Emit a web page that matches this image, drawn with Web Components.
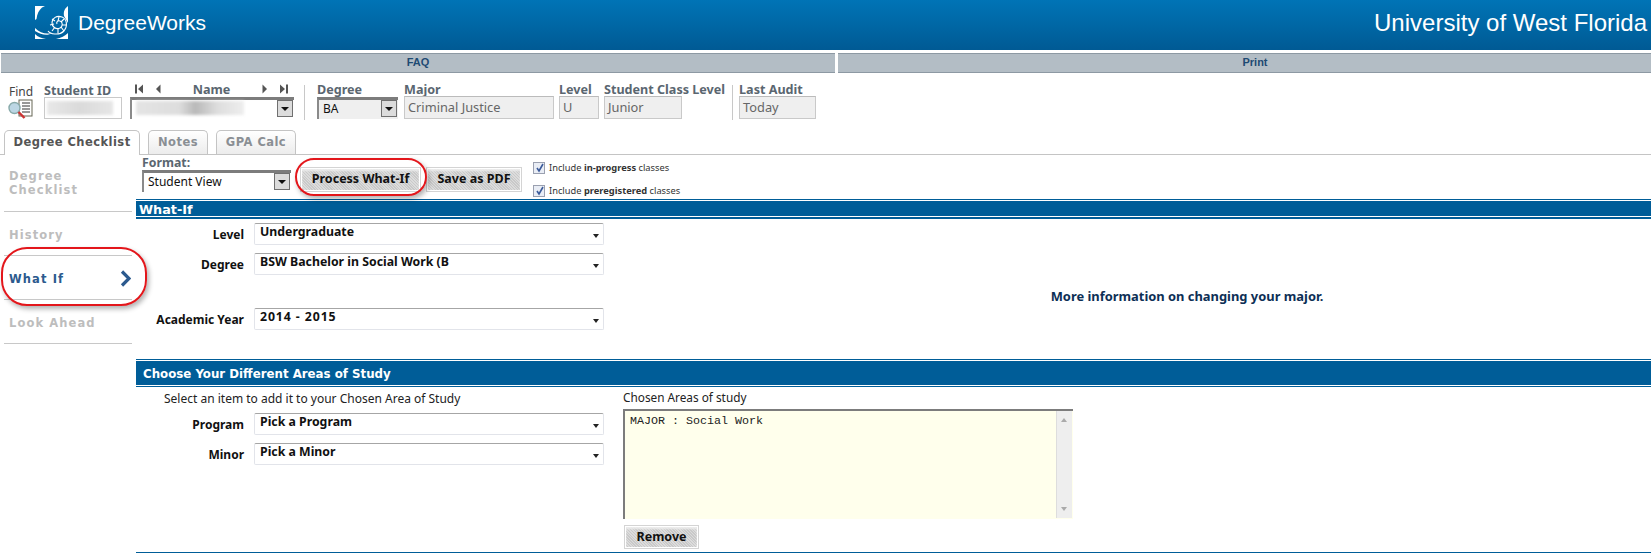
<!DOCTYPE html>
<html lang="en"><head><meta charset="utf-8"><title>DegreeWorks</title>
<style>
html,body{margin:0;padding:0;background:#fff}
body{width:1651px;height:553px;overflow:hidden;font-family:"Noto Sans","Liberation Sans",sans-serif;position:relative}
</style></head><body>
<dw-app></dw-app>
<script>
function def(name,css,html){
  customElements.define(name,class extends HTMLElement{
    constructor(){super();this.attachShadow({mode:'open'});}
    connectedCallback(){ if(!this.shadowRoot.firstChild) this.shadowRoot.innerHTML='<style>'+css+'</style>'+(typeof html==='function'?html(this):html); }
  });
}
const A=(e,n,d='')=>e.getAttribute(n)??d;

def('dw-header',`:host{display:flex;align-items:center;justify-content:space-between;height:50px;background:linear-gradient(#0074b6,#005a94);color:#fff;font-family:"Liberation Sans",sans-serif;padding:0 4px 0 35px;box-sizing:border-box}
.l{display:flex;align-items:center;gap:9px;font-size:21px;margin-top:-4px}
.r{font-size:24px;margin-top:-4px}svg{display:block}`,
`<div class="l"><svg width="34" height="34" viewBox="0 0 34 34">
<path d="M0 0H10L7 1.500C4 4 2 8 1.500 13L0 14ZM33 0V17L29 10C28.500 6 29 3 33 0ZM0 22C5 27 11 28.500 17 27 13 30 6 29 0 25ZM0 28V33H11C6 32 3 31 0 28ZM33 27V33H21C26 32 30 30 33 27Z" fill="#fff"/>
<g fill="none" stroke="#fff" stroke-width="1.100"><path d="M13 25C15 28 24 30 29 25 33 20 32 13 27 11 22 9 17 12 17 17 17 21 21 24 25 22 28 20 28 16 25 15 23 14 21 16 22 18"/><path d="M24 11L23 15M29 13L26 16M31 19L27 19M29 25L26 21M23 27L23 23M17 25L20 21M15 19L19 18M17 13L20 15"/></g></svg><span>DegreeWorks</span></div><div class="r">University of West Florida</div>`);

def('dw-nav',`:host{display:flex;gap:3px;margin:3px 0 0 1px;height:20px}
div{flex:1;background:#b3bdc5;border-top:1px solid #8d99a3;border-bottom:1px solid #8d99a3;font:700 11px/17px "Liberation Sans",sans-serif;color:#1e4a73;text-align:center;box-sizing:border-box;padding-left:21px}
div.a{flex:0 0 834px;padding-left:0}`,`<div class="a">FAQ</div><div>Print</div>`);

def('dw-field',`:host{display:flex;flex-direction:column}
.t{font:700 12.600px/15px "Noto Sans","Liberation Sans",sans-serif;color:#5a6670;white-space:nowrap;height:14px}
.b{box-sizing:border-box;height:23px;background:#efefef;border:1px solid #c9c9c9;border-top-color:#bbb;font:12.800px/21px "Noto Sans",sans-serif;color:#666;padding-left:3px}`,
e=>`<div class="t">${A(e,'label')}</div><div class="b" style="width:${A(e,'w')}px">${A(e,'value')}</div>`);

def('dw-combo',`:host{display:block;position:relative;box-sizing:border-box;height:22px;border-top:3px solid #7c7c7c;border-left:2px solid #8a8a8a;background:var(--bg,#fff);font:12px/18px "Noto Sans",sans-serif;color:#111;padding-left:4px}
.a{position:absolute;right:1px;top:0;width:16px;height:17px;background:#dcdcdc;border:1px solid #707070;box-sizing:border-box}
.a::after{content:"";position:absolute;left:3px;top:6px;border:4px solid transparent;border-top:4px solid #111;border-bottom:0}`,
`<slot></slot><div class="a"></div>`);

def('dw-toolbar',`:host{display:flex;align-items:flex-start;height:57px;box-sizing:border-box;padding-top:8px}
.find{padding:4px 0 0 9px;width:26px;font:12px/14px "Noto Sans",sans-serif;color:#444}
.id{margin-left:9px;width:78px;font:700 12.600px/15px "Noto Sans",sans-serif;color:#5a6670;padding-top:2px;white-space:nowrap}
.idb{box-sizing:border-box;width:78px;height:22px;margin-top:-1px;border:1px solid #c9c9c9;padding:3px 8px 3px 2px}
.blur{height:14px;background:linear-gradient(90deg,#e8e8e8,#dadada 50%,#e6e6e6);filter:blur(1.5px)}
.name{margin-left:8px;width:164px;display:flex;flex-direction:column}
.nv{display:flex;align-items:center;justify-content:space-between;height:16px;padding:0 6px 0 5px;font:700 12.600px/15px "Noto Sans",sans-serif;color:#5a6670;box-sizing:border-box}
.nv svg{display:block}.nb{display:flex;gap:11px}
.div{width:1px;height:35px;background:#c8c8c8;margin:4px 12px 0 10px}
.g{padding-top:1px}
.deg{width:81px;font:700 12.600px/15px "Noto Sans",sans-serif;color:#5a6670}
.deg dw-combo{--bg:#efefef}
dw-field{margin-left:5px}
dw-field.m{margin-left:6px}
.d2{margin:4px 6px 0 7px}`,
`<div class="find">Find<svg width="26" height="20" viewBox="0 0 26 20" style="display:block;margin:0 0 0 -2px"><rect x="12" y="1" width="13" height="16" fill="#fff" stroke="#665"/><path d="M15 4h8M15 7h8M15 10h8M15 13h8" stroke="#333" stroke-width="1"/><circle cx="7.500" cy="9" r="5.500" fill="#bcd6e4" stroke="#8aa" stroke-width="1.400"/><path d="M11.500 13l6 6" stroke="#c33" stroke-width="2.400"/></svg></div>
<div class="id">Student ID<div class="idb"><div class="blur"></div></div></div>
<div class="name"><div class="nv"><div class="nb"><svg width="9" height="10" viewBox="0 0 9 10"><path d="M0 .5h2v9H0zM8 .5v9L3 5z" fill="#555"/></svg><svg width="6" height="10" viewBox="0 0 6 10"><path d="M5.500 .5v9L1 5z" fill="#555"/></svg></div><span>Name</span><div class="nb"><svg width="6" height="10" viewBox="0 0 6 10"><path d="M.5 .5v9L5 5z" fill="#555"/></svg><svg width="9" height="10" viewBox="0 0 9 10"><path d="M1 .5v9L6 5zM7 .5h2v9H7z" fill="#555"/></svg></div></div>
<dw-combo style="height:22px"><div class="blur" style="width:108px;margin-top:1px;background:linear-gradient(90deg,#e4e4e4,#ddd 40%,#b9b9b9 55%,#ddd 75%,#eee)"></div></dw-combo></div>
<div class="div"></div>
<div class="g deg">Degree<dw-combo>BA</dw-combo></div>
<dw-field class="g m" label="Major" w="150" value="Criminal Justice"></dw-field>
<dw-field class="g" label="Level" w="40" value="U"></dw-field>
<dw-field class="g" label="Student Class Level" w="78" value="Junior"></dw-field>
<div class="div d2"></div>
<dw-field class="g" style="margin-left:0" label="Last Audit" w="77" value="Today"></dw-field>`);

def('dw-tabs',`:host{display:flex;gap:8px;height:25px;box-sizing:border-box;padding-left:4px;border-bottom:1px solid #c4c4c4}
div{box-sizing:border-box;height:24px;border:1px solid #c4c4c4;border-bottom:0;border-radius:5px 5px 0 0;background:linear-gradient(#fff,#ececec);font:700 11.500px/23px "DejaVu Sans",sans-serif;color:#8a8f94;text-align:center;letter-spacing:.45px}
.on{background:#fff;height:25px;color:#555;width:136px}`,
`<div class="on">Degree Checklist</div><div style="width:60px">Notes</div><div style="width:80px">GPA Calc</div>`);

def('dw-side',`:host{display:flex;flex-direction:column;width:132px;padding-left:4px;box-sizing:border-box;font:700 11.500px/14px "DejaVu Sans",sans-serif;letter-spacing:1.100px;color:#bdbdbd}
div{box-sizing:border-box;padding:2px 1px 0 5px;border-bottom:1px solid #c8c8c8;height:44px;display:flex;align-items:center;justify-content:space-between}
.first{height:57px;padding-top:0;padding-bottom:0}
.on{color:#2c5a8e}`,
`<div class="first"><span>Degree<br>Checklist</span></div><div>History</div><div class="on">What If<svg width="11" height="17" viewBox="0 0 11 17"><path d="M2 1.500l7 7-7 7" fill="none" stroke="#2c5a8e" stroke-width="3.200"/></svg></div><div>Look Ahead</div>`);

def('dw-btn',`:host{display:inline-block;box-sizing:border-box;height:var(--h,25px);border:1px solid #d4d4d4;padding:1px;background:#fff}
span{display:block;height:100%;background:repeating-linear-gradient(45deg,#dcdcdc 0 1px,#c9c9c9 1px 2px);box-shadow:inset 0 2px 2px #ececec;font:700 12.500px/20px "Noto Sans",sans-serif;color:#111;text-align:center}`,
`<span><slot></slot></span>`);

def('dw-check',`:host{display:flex;align-items:center;gap:4px;font:9.300px/12px "Noto Sans",sans-serif;color:#333;height:13px;white-space:nowrap}
b{color:#111}
i{display:block;width:12px;height:12px;box-sizing:border-box;border:1px solid #9aa0b0;background:#e9edf5;position:relative}
svg{position:absolute;left:1px;top:0}`,
`<i><svg width="10" height="10" viewBox="0 0 10 10"><path d="M2 5l2 3 4-7" fill="none" stroke="#3a5a9a" stroke-width="1.600"/></svg></i><span><slot></slot></span>`);

def('dw-bar',`:host{display:block;box-sizing:border-box;background:#005d98;color:#fff;font:700 11.800px/16px "DejaVu Sans",sans-serif}`,`<slot></slot>`);

def('dw-select',`:host{display:block;position:relative;box-sizing:border-box;width:350px;height:22px;border:1px solid #e2e4ea;border-top:1px solid #a6a6a6;border-radius:2px;font:700 12.300px/15px "Noto Sans",sans-serif;color:#111;padding:0 0 0 5px;background:#fff}
:host::after{content:"";position:absolute;right:4px;top:10px;border:3.500px solid transparent;border-top:4px solid #222;border-bottom:0}`,`<slot></slot>`);

def('dw-row',`:host{display:grid;grid-template-columns:108px 1fr;column-gap:10px;align-items:center;height:22px}
label{text-align:right;font:700 12px/14px "Noto Sans",sans-serif;color:#111;padding-top:2px}`,
e=>`<label>${A(e,'label')}</label><dw-select><slot></slot></dw-select>`);

def('dw-main',`:host{display:block;flex:1;min-width:0}
.top{display:flex;height:44px;box-sizing:border-box;padding-left:6px;padding-top:1px}
.fmt{width:149px;font:700 12.300px/14px "Noto Sans",sans-serif;color:#5a6670}
.btns{display:flex;gap:5px;margin:11px 0 0 9px;--h:25px}
.chk{margin-left:11px;padding-top:5px;display:flex;flex-direction:column;gap:10px}
.whatif{height:20px;box-shadow:inset 0 -2px 0 #005d98,inset 0 -3px 0 #fff,inset 0 1px 0 #005d98,inset 0 2px 0 #fff;padding:3px 0 0 3px;line-height:15px;font-size:12.800px}
.fl{display:flex;flex-direction:column;padding-top:4px;box-sizing:border-box}
.fl dw-row+dw-row{margin-top:8px}
.fl dw-row.y{margin-top:33px}
.more{flex:1;display:flex;justify-content:center;align-items:center;font:700 12.900px/16px "Noto Sans",sans-serif;color:#0d2f55;padding:14px 0 0 119px}
.wi2{display:flex;height:140px;box-sizing:border-box}
.wi2 .fl{width:468px;flex:none}
.ch{height:28px;padding:7px 0 0 7px;box-shadow:inset 0 -1px 0 #005d98,inset 0 -2px 0 #fff,inset 0 1px 0 #005d98,inset 0 2px 0 #fff;line-height:17px;box-sizing:border-box}
.area{display:flex;height:166px;box-sizing:border-box;border-bottom:1px solid #005d98}
.lc{width:487px;flex:none}
.hint{margin:4px 0 0 28px;font:12px/15px "Noto Sans",sans-serif;color:#222;height:15px}
.lc .rows{display:flex;flex-direction:column;gap:8px;margin-top:7px}
.rc{width:450px;padding-top:3px;font:11.800px/15px "Noto Sans",sans-serif;color:#222}
.ta{position:relative;box-sizing:border-box;height:110px;width:450px;margin-top:4px;border-top:2px solid #7c7c7c;border-left:2px solid #7c7c7c;background:#ffffec;font:11.670px/13px "Liberation Mono",monospace;color:#222;padding:4px 0 0 5px}
.sb{position:absolute;right:1px;top:0;bottom:1px;width:16px;background:#eee;border-left:1px solid #ddd;box-sizing:border-box}
.sb::before,.sb::after{content:"";position:absolute;left:4px;border:3px solid transparent}
.sb::before{top:7px;border-bottom:4px solid #aaa;border-top:0}
.sb::after{bottom:7px;border-top:4px solid #aaa;border-bottom:0}
.rc dw-btn{margin:6px 0 0 1px;width:75px;--h:24px}`,
`<div class="top"><div class="fmt">Format:<dw-combo>Student View</dw-combo></div>
<div class="btns"><dw-btn style="width:121px">Process What-If</dw-btn><dw-btn style="width:96px">Save as PDF</dw-btn></div>
<div class="chk"><dw-check>Include&nbsp;<b>in-progress</b>&nbsp;classes</dw-check><dw-check>Include&nbsp;<b>preregistered</b>&nbsp;classes</dw-check></div></div>
<dw-bar class="whatif">What-If</dw-bar>
<div class="wi2"><div class="fl"><dw-row label="Level">Undergraduate</dw-row><dw-row label="Degree">BSW Bachelor in Social Work (B</dw-row><dw-row class="y" label="Academic Year"><span style="letter-spacing:.9px">2014 - 2015</span></dw-row></div><div class="more">More information on changing your major.</div></div>
<dw-bar class="ch">Choose Your Different Areas of Study</dw-bar>
<div class="area"><div class="lc"><div class="hint">Select an item to add it to your Chosen Area of Study</div><div class="rows"><dw-row label="Program">Pick a Program</dw-row><dw-row label="Minor">Pick a Minor</dw-row></div></div>
<div class="rc">Chosen Areas of study<div class="ta">MAJOR : Social Work<div class="sb"></div></div><dw-btn>Remove</dw-btn></div></div>`);

def('dw-mark',`:host{position:absolute;display:block;box-sizing:border-box;border:2px solid #e3161b;box-shadow:2px 3px 5px rgba(0,0,0,.3);pointer-events:none}`,``);

def('dw-app',`:host{display:block;position:relative;height:553px}
.body{display:flex;gap:4px}`,
`<dw-header></dw-header><dw-nav></dw-nav><dw-toolbar></dw-toolbar><dw-tabs></dw-tabs><div class="body"><dw-side></dw-side><dw-main></dw-main></div>
<dw-mark style="left:295px;top:158px;width:132px;height:38px;border-radius:19px"></dw-mark>
<dw-mark style="left:1px;top:247px;width:146px;height:59px;border-radius:26px"></dw-mark>`);
</script></body></html>
